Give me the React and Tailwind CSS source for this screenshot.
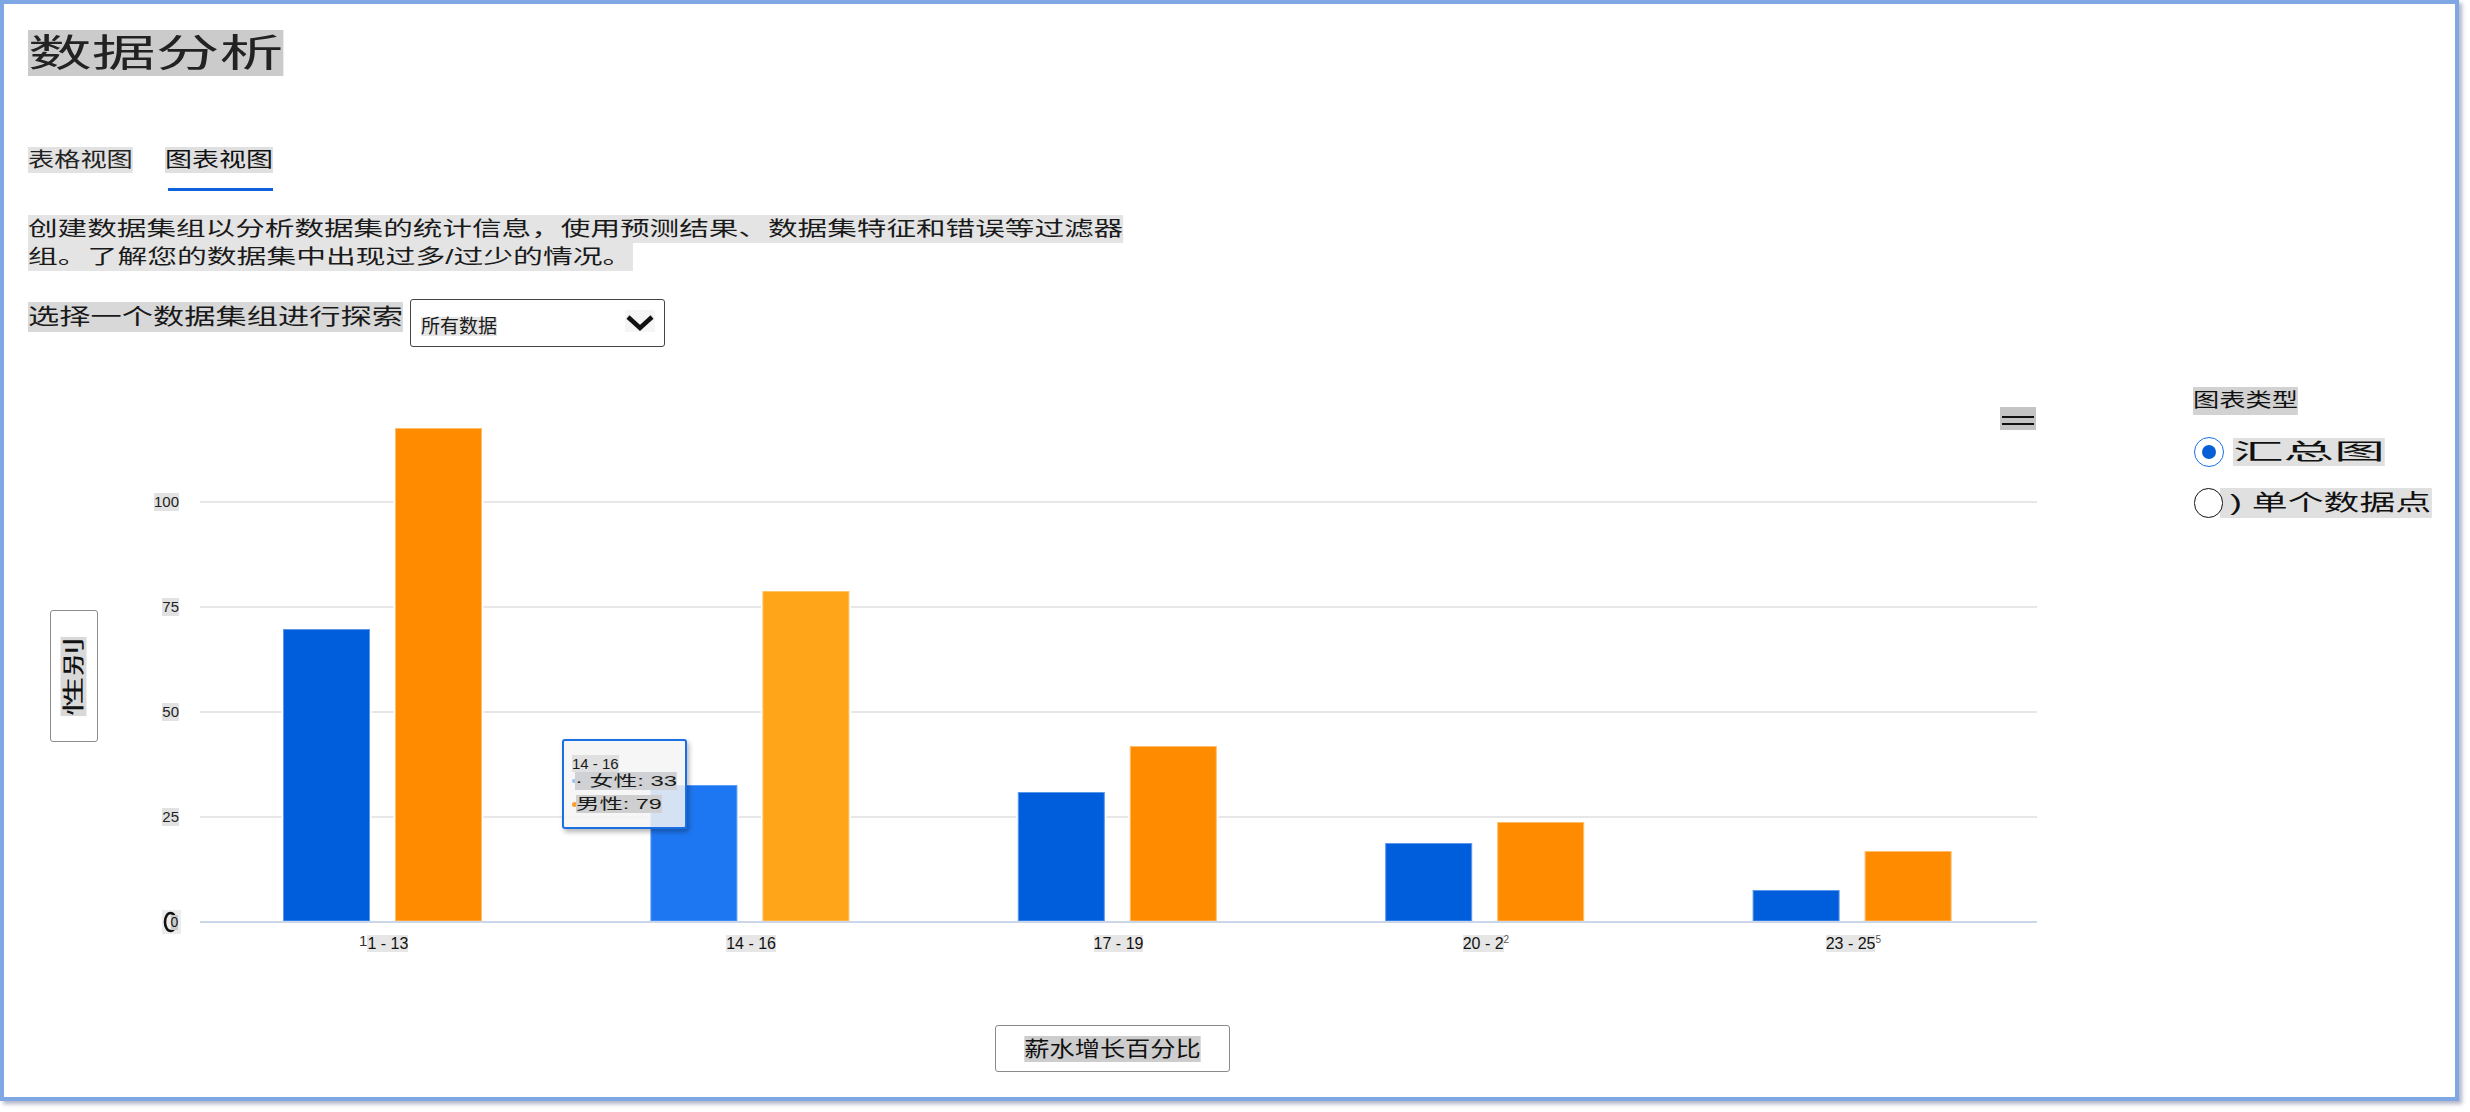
import React from "react";

const FONT = "font-['Liberation_Sans','Noto_Sans_CJK_SC',sans-serif]";

const cats = [
  { pre: "1", label: "1 - 13", post: "", bTop: 229, oTop: 28 },
  { pre: "", label: "14 - 16", post: "", bTop: 385, oTop: 191, hi: true },
  { pre: "", label: "17 - 19", post: "", bTop: 392, oTop: 346 },
  { pre: "", label: "20 - 2", post: "2", bTop: 443, oTop: 422 },
  { pre: "", label: "23 - 25", post: "5", bTop: 490, oTop: 451 },
];

const yLabels = ["100", "75", "50", "25", "0"];

function Bar({ x, top, fill, edge }) {
  const base = 521;
  const w = 87;
  return (
    <g>
      <rect x={x - 1.5} y={top - 1.5} width={w + 3} height={base - top + 1.5} fill="#ffffff" />
      <rect x={x + 0.5} y={top + 0.5} width={w - 1} height={base - top - 0.5} fill={fill} stroke={edge} strokeWidth="1" />
    </g>
  );
}

function Plot() {
  const step = 1837 / 5;
  return (
    <svg width="1837" height="524" viewBox="0 0 1837 524" className="block">
      {[102, 207, 312, 417].map((y) => (
        <line key={y} x1="0" x2="1837" y1={y} y2={y} stroke="#e7e7e7" strokeWidth="2" />
      ))}
      {cats.map((c, i) => {
        const x0 = i * step;
        return (
          <g key={i}>
            <Bar x={x0 + 83} top={c.bTop} fill={c.hi ? "#1e77f2" : "#005edc"} edge={c.hi ? "#5c9ef5" : "#5b98ea"} />
            <Bar x={x0 + 195} top={c.oTop} fill={c.hi ? "#ffa519" : "#ff8b00"} edge={c.hi ? "#ffc466" : "#ffbd6b"} />
          </g>
        );
      })}
      <line x1="0" x2="1837" y1="522" y2="522" stroke="#cbd6ea" strokeWidth="2" />
    </svg>
  );
}

export default function App() {
  return (
    <div className={`w-[2470px] h-[1112px] bg-white text-[#1a1a1a] ${FONT}`}>
      <div className="w-[2459px] h-[1101px] border-4 border-[#7fa7e3] bg-white shadow-[3px_3px_4px_rgba(80,90,130,0.45)] overflow-hidden">
        <div className="pl-[24px] pt-[26px]">
          {/* Title */}
          <div className="h-[46px] whitespace-nowrap">
            <span className="inline-block origin-left scale-x-[1.68] bg-[#cbcbcb] text-[38px] leading-[46px] text-[#222]">
              数据分析
            </span>
          </div>

          {/* Tabs */}
          <div className="mt-[71px] flex whitespace-nowrap">
            <div className="w-[137px]">
              <span className="inline-block origin-left scale-x-[1.31] bg-[#e2e2e2] text-[20px] leading-[26px] text-[#222]">
                表格视图
              </span>
            </div>
            <div className="flex flex-col items-start">
              <span className="inline-block origin-left scale-x-[1.35] bg-[#e0e0e0] text-[20px] leading-[26px] text-[#111]">
                图表视图
              </span>
              <div className="mt-[15px] ml-[3px] w-[105px] h-[3px] bg-[#0f62d9]" />
            </div>
          </div>

          {/* Description */}
          <div className="mt-[24px] whitespace-nowrap">
            <div className="h-[28px]">
              <span className="inline-block origin-left scale-x-[1.48] bg-[#e4e4e4] text-[20px] leading-[28px]">
                创建数据集组以分析数据集的统计信息，使用预测结果、数据集特征和错误等过滤器
              </span>
            </div>
            <div className="h-[28px]">
              <span className="inline-block origin-left scale-x-[1.49] bg-[#e4e4e4] text-[20px] leading-[28px]">
                组。了解您的数据集中出现过多/过少的情况。
              </span>
            </div>
          </div>

          {/* Select row */}
          <div className="mt-[28px] flex items-start whitespace-nowrap">
            <div className="w-[382px] mt-[3px]">
              <span className="inline-block origin-left scale-x-[1.42] bg-[#d8d8d8] text-[22px] leading-[30px]">
                选择一个数据集组进行探索
              </span>
            </div>
            <div className="w-[255px] h-[48px] border border-[#444] rounded-[3px] flex items-start bg-white">
              <span className="mt-[17px] ml-[10px] bg-[#e6e6e6] text-[19px] leading-[19px]">所有数据</span>
              <span className="ml-auto mr-[9px] mt-[10px] w-[30px] h-[22px] bg-[#f5f5f5] flex">
                <svg width="30" height="22" viewBox="0 0 30 22">
                  <path d="M3 7 L15 18 L27 7" fill="none" stroke="#111" strokeWidth="4.5" strokeLinejoin="miter" />
                </svg>
              </span>
            </div>
          </div>

          {/* Chart row */}
          <div className="mt-[40px] flex items-start">
            {/* Y axis title */}
            <div className="ml-[22px] mt-[223px] w-[48px] h-[132px] border border-[#8c8c8c] rounded-[3px] flex items-center justify-center whitespace-nowrap">
              <span className="inline-block -rotate-90">
                <span className="inline-block scale-x-[1.8] bg-[#d9d9d9] text-[22px] leading-[26px] text-[#111]">性别</span>
              </span>
            </div>

            {/* Y labels */}
            <div className="w-[81px] mt-[62px] flex flex-col">
              {yLabels.map((l) => (
                <div key={l} className="h-[105px] flex items-center justify-end">
                  {l === "0" ? (
                    <span className="relative flex items-center justify-center w-[19px] h-[24px] bg-[#ececec] mr-[-2px]">
                      <svg className="absolute left-[1px] top-[1px]" width="16" height="22" viewBox="0 0 16 22">
                        <ellipse cx="7.5" cy="11" rx="5.5" ry="9" fill="none" stroke="#111" strokeWidth="2.6" />
                      </svg>
                      <span className="relative ml-[6px] mt-[2px] bg-[#c8c8c8] text-[14px] leading-[15px]">0</span>
                    </span>
                  ) : (
                    <span className="bg-[#e2e2e2] text-[15px] leading-[18px] text-[#222]">{l}</span>
                  )}
                </div>
              ))}
            </div>

            {/* Plot column */}
            <div className="ml-[21px] mt-[13px] w-[1837px] flex flex-col">
              <div className="relative">
                <Plot />
                {/* menu icon */}
                <div className="absolute right-[1px] top-[7px] w-[36px] h-[23px] bg-[#c4c4c4] flex flex-col gap-[5px] pt-[9px] px-[2px]">
                  <div className="h-[2px] bg-[#111]" />
                  <div className="h-[2px] bg-[#111]" />
                </div>
                {/* tooltip */}
                <div className="absolute left-[362px] top-[339px] w-[125px] h-[90px] border-2 border-[#1c6fe3] rounded-[3px] bg-[rgba(245,245,245,0.85)] shadow-[2px_3px_5px_rgba(0,0,0,0.3)] pl-[8px] pt-[11px] whitespace-nowrap">
                  <div className="h-[16px]">
                    <span className="bg-[#e0e0e0] text-[15px] leading-[16px]">14 - 16</span>
                  </div>
                  <div className="mt-[4px] h-[18px] flex items-center">
                    <span className="w-[4px] h-[4px] rounded-full bg-[#9cc0f5]" />
                    <span className="-ml-[1px] inline-block origin-left scale-x-[1.59] bg-[#cfd1d4] text-[15px] leading-[18px]">· 女性: 33</span>
                  </div>
                  <div className="mt-[5px] h-[18px] flex items-center">
                    <span className="w-[5px] h-[5px] rounded-full bg-[#ff9d2e]" />
                    <span className="-ml-[1px] inline-block origin-left scale-x-[1.56] bg-[#cfcfcf] text-[15px] leading-[18px]">男性: 79</span>
                  </div>
                </div>
              </div>

              {/* X labels */}
              <div className="mt-[11px] flex whitespace-nowrap">
                {cats.map((c) => (
                  <div key={c.label} className="flex-1 flex justify-center items-start">
                    {c.pre && <span className="text-[15px] leading-[15px] text-[#333] -mt-[2px]">{c.pre}</span>}
                    <span className="bg-[#e6e6e6] text-[16px] leading-[17px] text-[#111]">{c.label}</span>
                    {c.post && <span className="text-[10px] leading-[10px] text-[#555]">{c.post}</span>}
                  </div>
                ))}
              </div>

              {/* X title */}
              <div className="mt-[73px] flex justify-center pr-[13px]">
                <div className="w-[235px] h-[47px] border border-[#8a8a8a] rounded-[3px] flex items-center justify-center whitespace-nowrap">
                  <span className="inline-block scale-x-[1.2] bg-[#cdcdcd] text-[21px] leading-[26px] text-[#111]">薪水增长百分比</span>
                </div>
              </div>
            </div>

            {/* Right panel */}
            <div className="ml-[156px] flex flex-col whitespace-nowrap">
              <div className="h-[28px]">
                <span className="inline-block origin-left scale-x-[1.38] bg-[#d2d2d2] text-[19px] leading-[28px] text-[#111]">图表类型</span>
              </div>
              <div className="mt-[22px] flex items-center">
                <div className="ml-[1px] w-[30px] h-[30px] rounded-full border-[1.5px] border-[#1a6fe0] flex items-center justify-center">
                  <div className="w-[14px] h-[14px] rounded-full bg-[#0a5fd8]" />
                </div>
                <span className="ml-[9px] inline-block origin-left scale-x-[2.3] bg-[#e0e0e0] text-[22px] leading-[28px] text-[#111]">汇总图</span>
              </div>
              <div className="mt-[21px] flex items-center">
                <div className="relative z-10 ml-[1px] w-[29px] h-[30px] rounded-full border-[1.5px] border-[#111] bg-white" />
                <span className="-ml-[3px] inline-block origin-left scale-x-[1.63] bg-[#e0e0e0] text-[22px] leading-[30px] text-[#111]">&nbsp;) 单个数据点</span>
              </div>
            </div>
          </div>
        </div>
      </div>
    </div>
  );
}
